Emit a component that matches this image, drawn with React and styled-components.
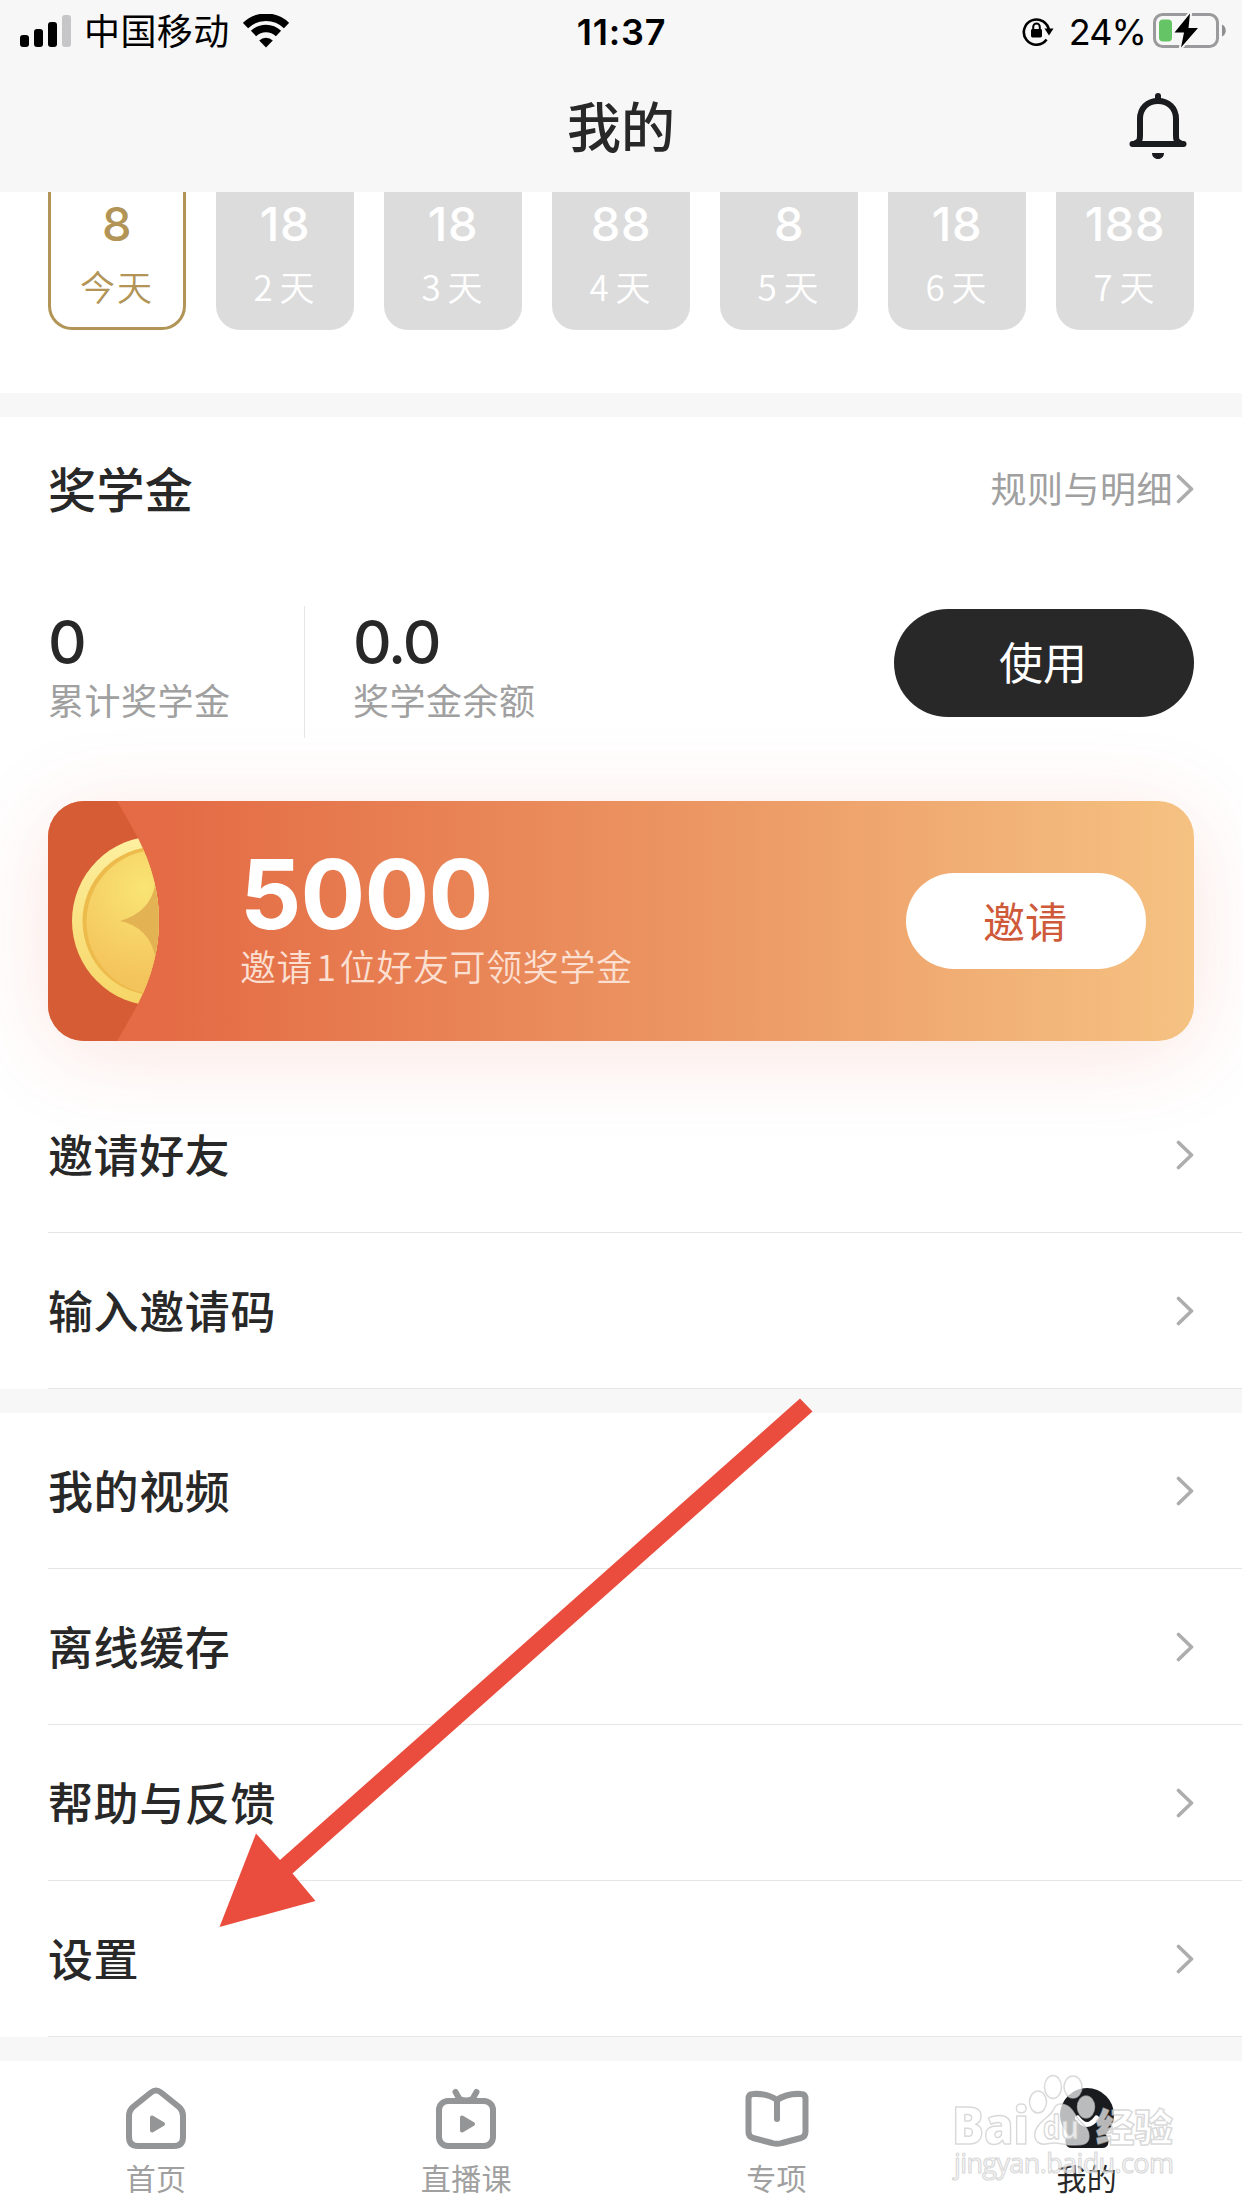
import React from 'react';
import styled, { createGlobalStyle } from 'styled-components';

const GlobalStyle = createGlobalStyle`
  * {
    box-sizing: border-box;
  }

  body {
    margin: 0;
    background-color: #ffffff;
    color: #282828;
    font-family: Inter, "Noto Sans CJK SC", sans-serif;
  }

  svg {
    display: block;
    flex: none;
  }
`;

const Screen = styled.div`
  position: relative;
  display: flex;
  flex-direction: column;
  width: 1242px;
  height: 2208px;
  overflow: hidden;
`;

const Header = styled.header`
  height: 192px;
  background-color: #f7f7f7;
  flex: none;
`;

const StatusBar = styled.div`
  display: grid;
  grid-template-columns: 1fr auto 1fr;
  align-items: center;
  height: 60px;
  padding: 0 15px 0 20px;
  color: #000000;
  font-size: 36px;
  line-height: 60px;
`;

const StatusGroup = styled.div`
  display: flex;
  align-items: center;
  justify-content: ${(props) => props.$align || 'flex-start'};
`;

const Carrier = styled.span`
  margin: 2px 13px 0 12px;
  letter-spacing: 0.4px;
`;

const Clock = styled.span`
  margin: 1px 4px 0 0;
  font-weight: 600;
  letter-spacing: 0.8px;
`;

const Percent = styled.span`
  margin: 1px 7px 0 15px;
  letter-spacing: -0.9px;
`;

const TitleBar = styled.div`
  display: grid;
  grid-template-columns: 1fr auto 1fr;
  align-items: center;
  height: 132px;
  padding: 0 54px;
`;

const Title = styled.h1`
  grid-column: 2;
  margin: 6px 0 0;
  font-size: 54px;
  font-weight: 500;
  line-height: 126px;
`;

const BellButton = styled.button`
  justify-self: end;
  padding: 0;
  border: 0;
  background: none;
`;

const DayStrip = styled.section`
  display: flex;
  gap: 30px;
  height: 201px;
  padding: 0 48px;
  flex: none;
`;

const DayCard = styled.div`
  display: flex;
  flex-direction: column;
  align-items: center;
  width: 138px;
  height: 138px;
  border: 3px solid ${(props) => (props.$active ? '#b29556' : '#dcdcdc')};
  border-top: 0;
  border-radius: 0 0 24px 24px;
  background-color: ${(props) => (props.$active ? '#ffffff' : '#dcdcdc')};
  color: ${(props) => (props.$active ? '#b29556' : '#ffffff')};
`;

const DayPoints = styled.div`
  margin-top: 2px;
  font-size: 47px;
  font-weight: 450;
  line-height: 60px;
  letter-spacing: 0.6px;
`;

const DayLabel = styled.div`
  margin-top: 7px;
  font-family: "Noto Sans CJK SC", sans-serif;
  font-size: 35px;
  font-weight: 350;
  line-height: 50px;
  letter-spacing: 2px;
  word-spacing: -5px;
`;

const Band = styled.div`
  height: 24px;
  background-color: #f7f7f7;
  flex: none;
`;

const Scholarship = styled.section`
  padding: 0 48px;
  flex: none;
`;

const SectionHead = styled.div`
  display: flex;
  align-items: center;
  justify-content: space-between;
  height: 144px;
`;

const SectionTitle = styled.h2`
  margin: 3px 0 0;
  font-size: 48px;
  font-weight: 500;
  line-height: 60px;
  letter-spacing: 0.4px;
`;

const RulesLink = styled.a`
  display: flex;
  align-items: center;
  gap: 3px;
  color: #a0a0a0;
  font-size: 36px;
  line-height: 50px;
  letter-spacing: 0.5px;
`;

const RulesText = styled.span`
  padding-top: 2px;
`;

const Stats = styled.div`
  display: flex;
  align-items: flex-start;
  padding-top: 45px;
  height: 240px;
`;

const Stat = styled.div`
  width: 257px;
  height: 132px;
  border-right: ${(props) => (props.$divided ? '1px solid #e6e6e6' : '0')};
  margin-right: ${(props) => (props.$divided ? '48px' : '0')};
`;

const StatValue = styled.div`
  margin-top: 6px;
  font-size: 60px;
  font-weight: 480;
  line-height: 60px;
  letter-spacing: -2px;
`;

const StatLabel = styled.div`
  margin-top: 5px;
  color: #a0a0a0;
  font-size: 36px;
  line-height: 50px;
  letter-spacing: 0.5px;
  white-space: nowrap;
`;

const PillButton = styled.button`
  flex: none;
  width: ${(props) => (props.$light ? '240px' : '300px')};
  height: ${(props) => (props.$light ? '96px' : '108px')};
  margin: ${(props) => (props.$light ? '0 0 0 auto' : '3px 0 0 auto')};
  padding: 0 2px 4px 0;
  border: 0;
  border-radius: 54px;
  background-color: ${(props) => (props.$light ? '#ffffff' : '#282828')};
  color: ${(props) => (props.$light ? '#cf5a3a' : '#ffffff')};
  font-family: inherit;
  font-size: ${(props) => (props.$light ? '42px' : '44px')};
`;

const InviteCard = styled.section`
  position: relative;
  display: flex;
  align-items: center;
  height: 240px;
  margin: 0 48px 36px;
  padding-right: 48px;
  border-radius: 36px;
  background: linear-gradient(90deg, #e46b45 10%, #ec9763 57%, #f5c282 100%);
  box-shadow: 0 12px 90px rgba(220, 80, 50, 0.15);
  flex: none;
`;

const InviteText = styled.div`
  margin-left: 76px;
  color: #ffffff;
`;

const InviteAmount = styled.div`
  margin-top: -5px;
  font-size: 96px;
  font-weight: 700;
  line-height: 92px;
  letter-spacing: -0.8px;
`;

const InviteNote = styled.div`
  margin-top: 1px;
  color: #fbdfd1;
  font-family: "Noto Sans CJK SC", sans-serif;
  font-size: 36px;
  font-weight: 350;
  line-height: 48px;
  letter-spacing: 0.6px;
  word-spacing: -5.5px;
`;

const Menu = styled.nav`
  padding-left: 48px;
  flex: none;
`;

const MenuRow = styled.a`
  display: flex;
  align-items: center;
  justify-content: space-between;
  height: 156px;
  padding-right: 48px;
  border-bottom: 1px solid #e6e6e6;
  font-size: 45px;
  font-weight: 500;
  letter-spacing: 0.6px;
`;

const MenuLabel = styled.span`
  padding-bottom: 3px;
`;

const TabBar = styled.footer`
  display: grid;
  grid-template-columns: repeat(4, 1fr);
  height: 147px;
  padding-left: 1px;
  flex: none;
`;

const Tab = styled.a`
  display: flex;
  flex-direction: column;
  align-items: center;
  padding-top: 25px;
  color: ${(props) => (props.$active ? '#282828' : '#a0a0a0')};
  font-size: 30px;
  line-height: 40px;
  letter-spacing: 0.4px;
`;

const TabLabel = styled.span`
  margin-top: 7px;
`;

const Arrow = styled.svg`
  position: absolute;
  left: 210px;
  top: 1390px;
`;

const Watermark = styled.svg`
  position: absolute;
  left: 942px;
  top: 2068px;
`;

const SignalIcon = () => (
  <svg width="52" height="34" viewBox="0 0 52 34">
    <rect x="0" y="21" width="9" height="12" rx="3" />
    <rect x="14" y="15" width="9" height="18" rx="3" />
    <rect x="28" y="8" width="9" height="25" rx="3" />
    <rect x="42" y="1" width="9" height="32" rx="3" fill="#c6c6c8" />
  </svg>
);

const WifiIcon = () => (
  <svg width="46" height="34" viewBox="0 0 46 34">
    <g fill="none" stroke="#000" strokeWidth="7.5">
      <path d="M2.5 11.5a29.5 29.5 0 0 1 41 0" />
      <path d="M10.5 19.5a18 18 0 0 1 25 0" />
    </g>
    <path d="M23 33.5l-6.8-6.9a9.8 9.8 0 0 1 13.6 0z" />
  </svg>
);

const LockIcon = () => (
  <svg width="32" height="30" viewBox="0 0 32 30">
    <path
      d="M24.6 23.6A12.6 12.6 0 1 1 27 15"
      fill="none"
      stroke="#000"
      strokeWidth="2.6"
    />
    <path d="M22.5 12.5h9l-4.5 7z" />
    <rect x="9" y="13" width="11" height="8.5" rx="1.4" />
    <path d="M11.2 13.5v-2.6a3.3 3.3 0 0 1 6.6 0v2.6" fill="none" stroke="#000" strokeWidth="2" />
  </svg>
);

const BatteryIcon = () => (
  <svg width="74" height="36" viewBox="0 0 74 36">
    <rect x="1.5" y="1.5" width="63" height="32" rx="8" fill="none" stroke="#9a9a9c" strokeWidth="3" />
    <rect x="6" y="6.5" width="13" height="22" rx="4" fill="#65c466" />
    <path d="M69 11.5c5 2 5 10 0 12z" fill="#8f8f91" />
    <path
      d="M37 0.5L21.5 19.500h9.5L28 34.500l17-19.500h-9.500z"
      fill="#000"
      stroke="#f7f7f7"
      strokeWidth="4"
      paintOrder="stroke"
      strokeLinejoin="round"
    />
  </svg>
);

const BellIcon = () => (
  <svg width="60" height="68" viewBox="0 0 60 68">
    <g fill="none" stroke="#1a1b1e" strokeWidth="6" strokeLinecap="round">
      <path d="M30 4v5" />
      <path d="M8 51c4-2 4-4 4-8V27C12 16 19.500 9 30 9s18 7 18 18v16c0 4 0 6 4 8" />
      <path d="M4.500 52h51" />
    </g>
    <path d="M24 61h12c0 3.500-2.500 6-6 6s-6-2.500-6-6z" fill="#1a1b1e" />
  </svg>
);

const Chevron = () => (
  <svg width="18" height="34" viewBox="0 0 18 34">
    <path
      d="M2.500 4.500L15.500 17 2.500 29.500"
      fill="none"
      stroke="#adadad"
      strokeWidth="3.600"
      strokeLinecap="round"
      strokeLinejoin="round"
    />
  </svg>
);

const CoinArt = () => (
  <svg width="116" height="240" viewBox="0 0 116 240">
    <defs>
      <clipPath id="pocket">
        <path d="M36 0H69Q79 17 90 37Q111 79 111 120T90 203Q79 223 69 240H36A36 36 0 0 1 0 204V36A36 36 0 0 1 36 0z" />
      </clipPath>
      <linearGradient id="rim" x1="0" y1="0" x2="0" y2="1">
        <stop offset="0" stopColor="#fdf0a0" />
        <stop offset="1" stopColor="#f6d566" />
      </linearGradient>
      <radialGradient id="face" gradientUnits="userSpaceOnUse" cx="96" cy="88" r="90">
        <stop offset="0" stopColor="#f9e474" />
        <stop offset="1" stopColor="#f4c45c" />
      </radialGradient>
    </defs>
    <g clipPath="url(#pocket)">
      <rect width="116" height="240" fill="#d65c35" />
      <circle cx="109" cy="120" r="85" fill="url(#rim)" />
      <circle cx="109" cy="120" r="74.500" fill="#edbb4c" />
      <circle cx="111" cy="121" r="72.500" fill="url(#face)" />
      <path d="M72 120C92 114 104 102 107 84L116 80V160L107 155C104 138 92 124 72 120z" fill="#e3b353" />
    </g>
  </svg>
);

const HomeIcon = () => (
  <svg width="64" height="66" viewBox="0 0 64 66">
    <path
      d="M27 6.500Q32 2.500 37 6.500L55 21Q59 24.500 59 30V51Q59 60 50 60H14Q5 60 5 51V30Q5 24.500 9 21z"
      fill="none"
      stroke="#949596"
      strokeWidth="6"
    />
    <path d="M28 31.500v13l11-6.500z" fill="#949596" stroke="#949596" strokeWidth="4" strokeLinejoin="round" />
  </svg>
);

const LiveIcon = () => (
  <svg width="64" height="66" viewBox="0 0 64 66">
    <rect x="5" y="15" width="54" height="45" rx="9" fill="none" stroke="#949596" strokeWidth="6" />
    <path
      d="M21.500 6l4 7Q32 16 38.500 13l4-7"
      fill="none"
      stroke="#949596"
      strokeWidth="6"
      strokeLinecap="round"
      strokeLinejoin="round"
    />
    <path d="M28 31.500v13l11-6.500z" fill="#949596" stroke="#949596" strokeWidth="4" strokeLinejoin="round" />
  </svg>
);

const BookIcon = () => (
  <svg width="64" height="66" viewBox="0 0 64 66">
    <g fill="none" stroke="#949596" strokeWidth="6" strokeLinecap="round" strokeLinejoin="round">
      <path d="M32 14Q22 7 8 8Q3.500 8 3.500 13V46Q3.500 50.500 8 52L27 57Q32 58.500 37 57L56 52Q60.500 50.500 60.500 46V13Q60.500 8 56 8Q42 7 32 14z" />
      <path d="M32 14v19" />
    </g>
  </svg>
);

const MineIcon = () => (
  <svg width="64" height="66" viewBox="0 0 64 66">
    <circle cx="32" cy="29" r="27" fill="#1a1b1e" />
    <path d="M15 47h34q5 4 4.500 9-.5 6-6.500 6H17q-6 0-6.500-6Q10 51 15 47z" fill="#1a1b1e" />
    <path d="M22.500 32q9.500 13 19 0" fill="none" stroke="#fff" strokeWidth="5" strokeLinecap="round" />
  </svg>
);

const WatermarkArt = () => (
  <Watermark width="250" height="140" viewBox="0 0 250 140">
    <g
      fill="#ffffff"
      fillOpacity="0.7"
      stroke="#c4c4c4"
      strokeOpacity="0.65"
      strokeWidth="1.500"
      strokeLinejoin="round"
      fontFamily='"Open Sans", "Noto Sans CJK SC", sans-serif'
    >
      <ellipse cx="96" cy="34" rx="8.500" ry="11" />
      <ellipse cx="111" cy="19" rx="8.500" ry="11.500" />
      <ellipse cx="131" cy="19" rx="9" ry="11" />
      <ellipse cx="144" cy="39" rx="8.500" ry="11" />
      <path d="M118 36c8 0 12 5 16 12s13 11 13 20-7 9-16 9-12-2-19-2-10 3-15 0-6-10-1-17 11-9 14-14 4-8 8-8z" />
      <text x="10" y="76" fontSize="51" fontWeight="800" textLength="77" lengthAdjust="spacingAndGlyphs">Bai</text>
      <text x="101" y="71" fontSize="32" fontWeight="700" textLength="36" lengthAdjust="spacingAndGlyphs">du</text>
      <text
        x="154"
        y="73"
        fontSize="38"
        fontWeight="900"
        textLength="77"
        lengthAdjust="spacingAndGlyphs"
        fontFamily='"Noto Sans CJK SC", sans-serif'
      >
        经验
      </text>
      <text x="12" y="105" fontSize="27" textLength="220" strokeWidth="1.200">
        jingyan.baidu.com
      </text>
    </g>
  </Watermark>
);

const App = () => {
  const days = [
    { points: 8, label: '今天', active: true },
    { points: 18, label: '2 天' },
    { points: 18, label: '3 天' },
    { points: 88, label: '4 天' },
    { points: 8, label: '5 天' },
    { points: 18, label: '6 天' },
    { points: 188, label: '7 天' },
  ];

  const inviteMenu = ['邀请好友', '输入邀请码'];
  const mainMenu = ['我的视频', '离线缓存', '帮助与反馈', '设置'];

  const tabs = [
    { label: '首页', icon: <HomeIcon /> },
    { label: '直播课', icon: <LiveIcon /> },
    { label: '专项', icon: <BookIcon /> },
    { label: '我的', icon: <MineIcon />, active: true },
  ];

  return (
    <>
      <GlobalStyle />
      <Screen>
        <Header>
          <StatusBar>
            <StatusGroup>
              <SignalIcon />
              <Carrier>中国移动</Carrier>
              <WifiIcon />
            </StatusGroup>
            <Clock>11:37</Clock>
            <StatusGroup $align="flex-end">
              <LockIcon />
              <Percent>24%</Percent>
              <BatteryIcon />
            </StatusGroup>
          </StatusBar>
          <TitleBar>
            <Title>我的</Title>
            <BellButton>
              <BellIcon />
            </BellButton>
          </TitleBar>
        </Header>

        <DayStrip>
          {days.map((day) => (
            <DayCard key={day.label} $active={day.active}>
              <DayPoints>{day.points}</DayPoints>
              <DayLabel>{day.label}</DayLabel>
            </DayCard>
          ))}
        </DayStrip>
        <Band />

        <Scholarship>
          <SectionHead>
            <SectionTitle>奖学金</SectionTitle>
            <RulesLink>
              <RulesText>规则与明细</RulesText>
              <Chevron />
            </RulesLink>
          </SectionHead>
          <Stats>
            <Stat $divided>
              <StatValue>0</StatValue>
              <StatLabel>累计奖学金</StatLabel>
            </Stat>
            <Stat>
              <StatValue>0.0</StatValue>
              <StatLabel>奖学金余额</StatLabel>
            </Stat>
            <PillButton>使用</PillButton>
          </Stats>
        </Scholarship>

        <InviteCard>
          <CoinArt />
          <InviteText>
            <InviteAmount>5000</InviteAmount>
            <InviteNote>邀请 1 位好友可领奖学金</InviteNote>
          </InviteText>
          <PillButton $light>邀请</PillButton>
        </InviteCard>

        <Menu>
          {inviteMenu.map((label) => (
            <MenuRow key={label}>
              <MenuLabel>{label}</MenuLabel>
              <Chevron />
            </MenuRow>
          ))}
        </Menu>
        <Band />
        <Menu>
          {mainMenu.map((label) => (
            <MenuRow key={label}>
              <MenuLabel>{label}</MenuLabel>
              <Chevron />
            </MenuRow>
          ))}
        </Menu>
        <Band />

        <TabBar>
          {tabs.map((tab) => (
            <Tab key={tab.label} $active={tab.active}>
              {tab.icon}
              <TabLabel>{tab.label}</TabLabel>
            </Tab>
          ))}
        </TabBar>

        <Arrow width="610" height="545" viewBox="210 1390 610 545">
          <path
            d="M219.500 1927L256 1833.500l24 26.500L800 1398.500l12.500 13-520 462 23 27.500z"
            fill="#ea4d3d"
          />
        </Arrow>
        <WatermarkArt />
      </Screen>
    </>
  );
};

export default App;
